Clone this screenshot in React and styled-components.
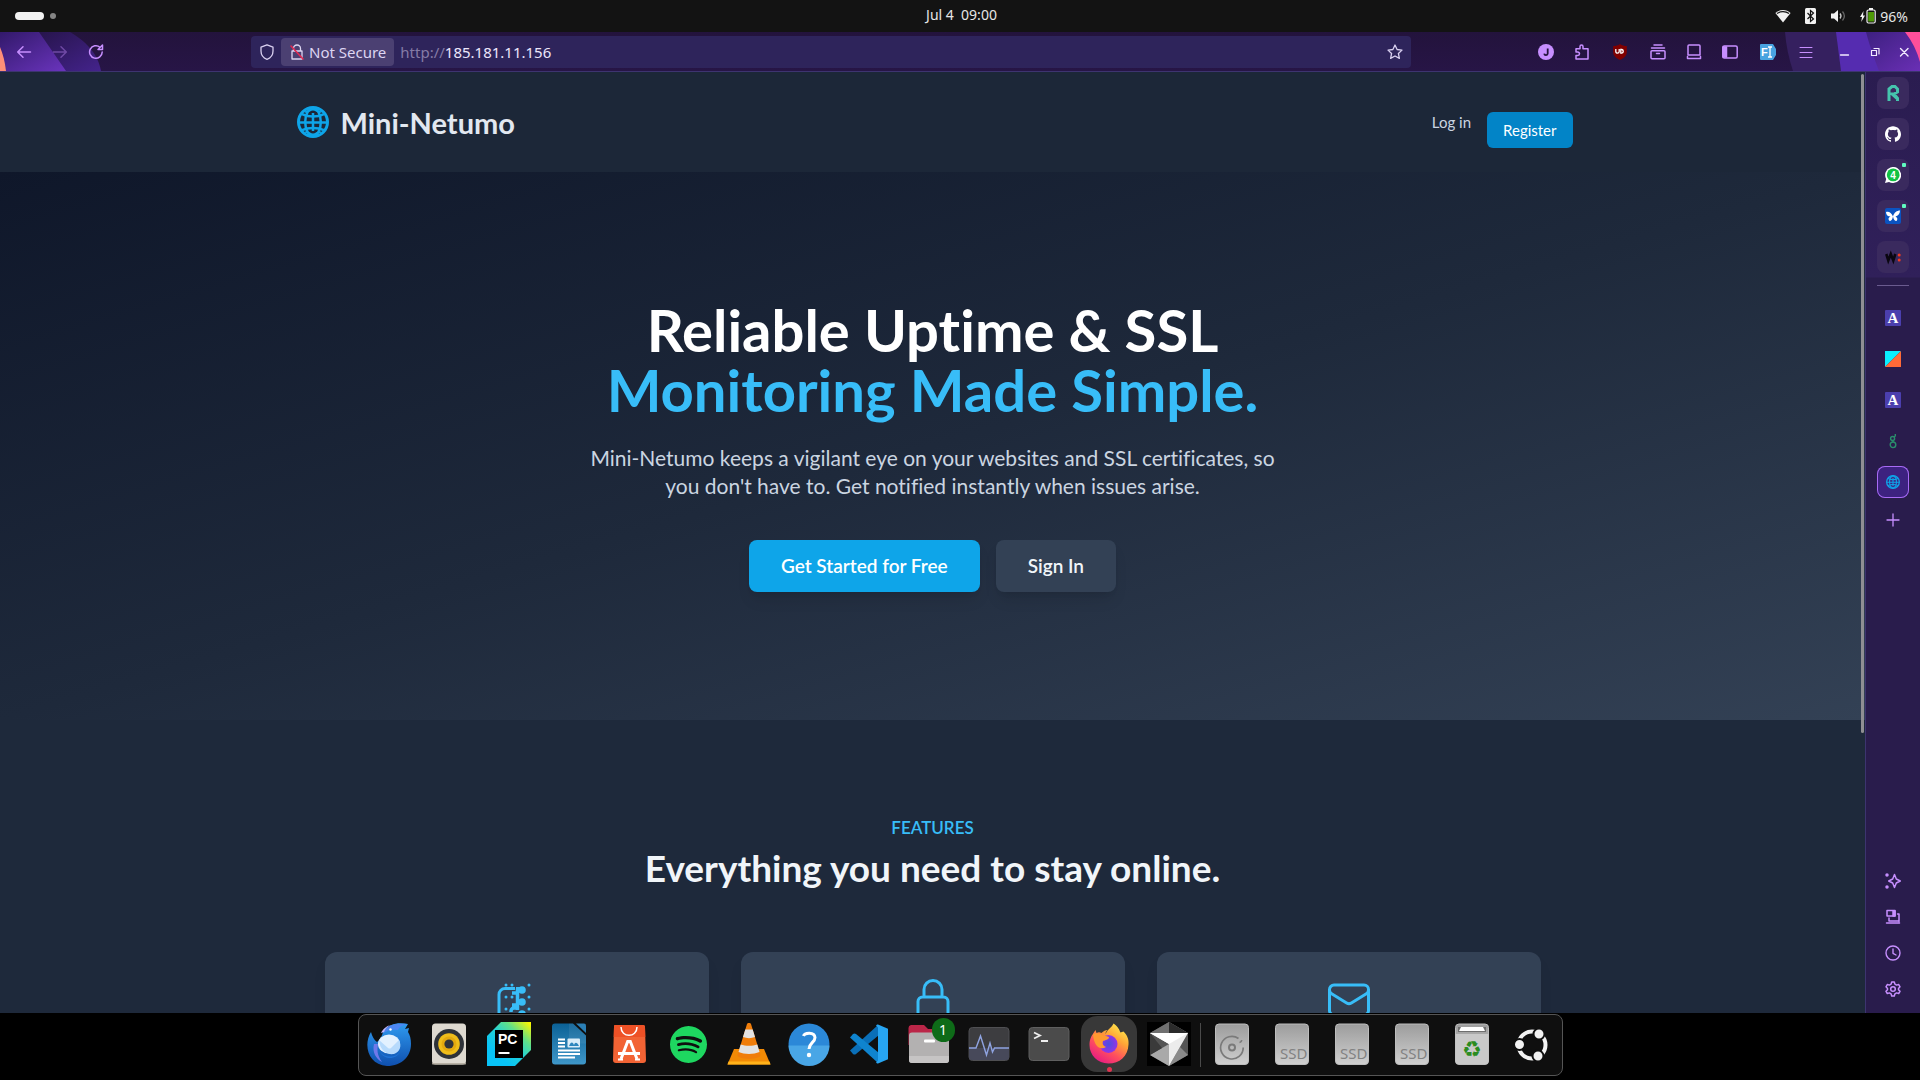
import React from 'react';
import styled, { createGlobalStyle } from 'styled-components';
import { SiSpotify, SiGithub } from 'react-icons/si';

const GlobalStyle = createGlobalStyle`
  *, *::before, *::after { box-sizing: border-box; }
  body { margin: 0; background: #000; overflow: hidden; }
  button, input { font: inherit; color: inherit; border: 0; background: none; padding: 0; margin: 0; }
  button { cursor: pointer; }
  a { color: inherit; text-decoration: none; }
  h1, h2, p { margin: 0; }
  svg { display: block; flex: none; }
`;

/* ---------- shell ---------- */
const Desktop = styled.div`
  display: grid;
  grid-template-rows: 32px minmax(0, 1fr) 67px;
  height: 100vh;
  background: #000;
  font-family: 'Noto Sans', sans-serif;
  font-size: 14px;
`;
const TopBar = styled.header`
  display: grid;
  grid-template-columns: 1fr auto 1fr;
  align-items: center;
  padding: 0 12px 0 15px;
  background: #131313;
  color: #e6e6e6;
`;
const Workspaces = styled.button`
  display: flex;
  align-items: center;
  gap: 6px;
  justify-self: start;
`;
const WorkspacePill = styled.span`
  width: ${(p) => (p.$active ? 29 : 6)}px;
  height: ${(p) => (p.$active ? 8 : 6)}px;
  border-radius: 4px;
  background: ${(p) => (p.$active ? '#f2f2f2' : '#858585')};
`;
const Clock = styled.time`
  white-space: pre;
  line-height: 30px;
  align-self: start;
`;
const SystemTray = styled.div`
  display: flex;
  align-items: center;
  justify-self: end;
  gap: 14px;
`;
const Battery = styled.span`
  display: flex;
  align-items: center;
  gap: 4px;
`;

/* ---------- browser chrome ---------- */
const Browser = styled.div`
  display: flex;
  flex-direction: column;
  min-height: 0;
`;
const Toolbar = styled.div`
  position: relative;
  display: flex;
  align-items: center;
  height: 40px;
  flex: none;
  background: linear-gradient(#23133c, #271546);
  border-bottom: 1px solid #3d3470;
  color: #c78fff;
`;
const ThemeArt = styled.svg`
  position: absolute;
  top: 0;
  ${(p) => (p.$side === 'left' ? 'left: 0;' : 'right: 0;')}
`;
const NavButtons = styled.nav`
  position: relative;
  display: flex;
  width: 251px;
  padding-left: 6px;
`;
const IconButton = styled.button`
  display: grid;
  place-items: center;
  width: ${(p) => p.$w || 36}px;
  height: 32px;
  flex: none;
  opacity: ${(p) => (p.$dim ? 0.4 : 1)};
  color: ${(p) => p.$color || 'inherit'};
`;
const UrlBar = styled.form`
  display: flex;
  align-items: center;
  flex: 1;
  height: 32px;
  padding: 0 0 0 2px;
  border-radius: 4px;
  background: #2e245b;
  color: #d9d0f0;
  font-size: 15px;
`;
const SecurityChip = styled.button`
  display: flex;
  align-items: center;
  gap: 4px;
  height: 28px;
  padding: 0 8px;
  border-radius: 4px;
  background: #4b4072;
  color: #ddd5f2;
  line-height: 26px;
  white-space: nowrap;
`;
const UrlScheme = styled.label`
  padding-left: 6px;
  color: #857ba6;
`;
const UrlInput = styled.input`
  flex: 1;
  min-width: 0;
  color: #ece6fb;
  outline: none;
`;
const Extensions = styled.div`
  position: relative;
  display: flex;
  flex: none;
  padding-left: 117px;
`;
const BrowserBody = styled.div`
  display: flex;
  flex: 1;
  min-height: 0;
`;

/* ---------- side panel ---------- */
const SidePanel = styled.aside`
  display: flex;
  flex-direction: column;
  align-items: center;
  width: 55px;
  flex: none;
  padding: 5px 0 6px;
  border-left: 1px solid #3d3470;
  background: linear-gradient(#2a1c50 0, #30205a 205px, #291c4c 206px);
  color: #c78fff;
`;
const TabStack = styled.div`
  display: flex;
  flex-direction: column;
  gap: 9px;
`;
const TabTile = styled.button`
  position: relative;
  display: grid;
  place-items: center;
  width: 32px;
  height: 32px;
  border-radius: 8px;
  background: ${(p) => (p.$active ? '#3d2280' : p.$pinned ? '#3a2a5e' : 'transparent')};
  box-shadow: ${(p) => (p.$active ? 'inset 0 0 0 1px #a86bf5' : 'none')};
`;
const UnreadDot = styled.span`
  position: absolute;
  top: 4px;
  right: 3px;
  width: 4px;
  height: 4px;
  border-radius: 1px;
  background: #5ffbc0;
`;
const PanelDivider = styled.hr`
  width: 32px;
  height: 1px;
  margin: 12px 0 16px;
  border: 0;
  background: #6a5b8f;
`;
const NewTab = styled.div`
  padding-top: 4px;
`;
const ToolStack = styled.div`
  display: flex;
  flex-direction: column;
  margin-top: auto;
`;
const ToolButton = styled.button`
  display: grid;
  place-items: center;
  width: 32px;
  height: 36px;
`;

/* ---------- web page ---------- */
const PageArea = styled.div`
  display: flex;
  flex: 1;
  min-width: 0;
  position: relative;
  overflow: hidden;
  background: #1e293b;
`;
const Page = styled.div`
  flex: 1;
  min-width: 0;
  font-family: Lato, sans-serif;
  font-variant-ligatures: none;
`;
const ScrollThumb = styled.span`
  position: absolute;
  top: 2px;
  right: 1px;
  width: 3px;
  height: 70%;
  border-radius: 2px;
  background: #8f8f93;
`;
const SiteHeader = styled.header`
  background: #1c2738;
`;
const HeaderInner = styled.div`
  display: flex;
  align-items: center;
  justify-content: space-between;
  max-width: 1280px;
  height: 100px;
  margin: 0 auto;
  padding-left: 4px;
`;
const Brand = styled.a`
  display: flex;
  align-items: center;
  gap: 12px;
  color: #e2e8f0;
  font-size: 29px;
  font-weight: 700;
`;
const AuthLinks = styled.nav`
  display: flex;
  align-items: center;
  gap: 16px;
  font-size: 15px;
  line-height: 20px;
`;
const LoginLink = styled.a`
  color: #cbd5e1;
`;
const RegisterLink = styled.a`
  margin-top: 16px;
  padding: 8px 16px;
  border-radius: 6px;
  background: #0284c7;
  color: #fff;
`;
const Hero = styled.section`
  display: flex;
  flex-direction: column;
  align-items: center;
  padding: 128px 24px;
  background: linear-gradient(to bottom right, #0f172a, #1e293b, #334155);
  text-align: center;
`;
const HeroTitle = styled.h1`
  font-size: 58px;
  line-height: 60px;
  font-weight: 700;
`;
const TitleLine = styled.span`
  display: block;
  color: ${(p) => (p.$accent ? '#38bdf8' : '#fff')};
`;
const HeroText = styled.p`
  max-width: 700px;
  margin-top: 24px;
  color: #cbd5e1;
  font-size: 21px;
  line-height: 28px;
`;
const Actions = styled.div`
  display: flex;
  gap: 16px;
  margin-top: 40px;
`;
const ActionLink = styled.a`
  padding: 12px 32px;
  border-radius: 8px;
  background: ${(p) => (p.$primary ? '#0ea5e9' : '#334155')};
  box-shadow: 0 10px 15px -3px rgba(0, 0, 0, 0.1), 0 4px 6px -4px rgba(0, 0, 0, 0.1);
  color: ${(p) => (p.$primary ? '#fff' : '#f1f5f9')};
  font-size: 19px;
  line-height: 28px;
  font-weight: 600;
`;
const Features = styled.section`
  padding: 96px 24px;
  text-align: center;
`;
const Eyebrow = styled.p`
  color: #38bdf8;
  font-size: 17px;
  line-height: 24px;
  font-weight: 600;
`;
const SectionTitle = styled.h2`
  margin-top: 8px;
  color: #f1f5f9;
  font-size: 37px;
  line-height: 40px;
  font-weight: 700;
`;
const CardGrid = styled.div`
  display: grid;
  grid-template-columns: repeat(3, 1fr);
  gap: 32px;
  max-width: 1216px;
  margin: 64px auto 0;
`;
const Card = styled.article`
  display: flex;
  justify-content: center;
  min-height: 220px;
  padding: 24px;
  border-radius: 12px;
  background: #334155;
  box-shadow: 0 10px 15px -3px rgba(0, 0, 0, 0.1);
  color: #38bdf8;
`;

/* ---------- dock ---------- */
const DockArea = styled.footer`
  display: flex;
  justify-content: center;
  align-items: flex-start;
  padding-top: 1px;
`;
const Dock = styled.nav`
  display: flex;
  height: 62px;
  border: 1px solid #555;
  border-radius: 8px;
  background: #0f0f0f;
`;
const DockItem = styled.button`
  position: relative;
  display: grid;
  place-items: center;
  width: 60px;
  height: 60px;
  padding-bottom: 2px;
`;
const ActiveTile = styled.span`
  display: grid;
  place-items: center;
  width: 56px;
  height: 56px;
  border-radius: 16px;
  background: #383838;
`;
const RunningDot = styled.span`
  position: absolute;
  bottom: 3px;
  left: 28px;
  width: 5px;
  height: 5px;
  border-radius: 50%;
  background: #e0334f;
`;
const DockBadge = styled.span`
  position: absolute;
  top: 3px;
  right: 4px;
  width: 23px;
  height: 24px;
  border-radius: 12px;
  background: #0e6b18;
  color: #fff;
  font-size: 14px;
  line-height: 24px;
`;
const DockDivider = styled.span`
  width: 1px;
  height: 44px;
  margin: 8px 1px;
  background: #4a4a4a;
`;

/* ---------- small icons ---------- */
const Line = ({ size = 16, sw = 1.3, children, box = 16 }) => (
  <svg width={size} height={size} viewBox={`0 0 ${box} ${box}`} fill="none" stroke="currentColor" strokeWidth={sw} strokeLinecap="round" strokeLinejoin="round">
    {children}
  </svg>
);

const GlobeLogo = ({ size }) => (
  <svg width={size} height={size} viewBox="0 0 32 32" fill="none" stroke="#0ea5e9" strokeWidth="2.5">
    <circle cx="16" cy="16" r="14.5" strokeWidth="3" />
    <ellipse cx="16" cy="16" rx="7.8" ry="14" />
    <path d="M16 7v18M2 16.5h28" />
    <path d="M5 8.2c6.500 3.200 15.500 3.200 22 0M5 24.200c6.500-3 15.500-3 22 0" />
    <path d="M8 5.500c2.500 2 4.500-2 8-2s5.500 4 8 2M8 26.500c2.500-2 4.500 2 8 2s5.500-4 8-2" strokeWidth="1.800" />
  </svg>
);

const Wifi = () => (
  <svg width="16" height="16" viewBox="0 0 16 16">
    <path d="M.4 5C4.600 1 11.400 1 15.600 5L8 14.500z" fill="#f2f2f2" />
    <path d="M2 5.600C5.400 3 10.600 3 14 5.600" stroke="#131313" strokeWidth="1.300" fill="none" />
  </svg>
);
const Bluetooth = () => (
  <svg width="11" height="16" viewBox="0 0 11 16">
    <rect width="11" height="16" rx="1.500" fill="#f2f2f2" />
    <path d="M2.500 5l6 6-3 2.500v-11L8.500 5l-6 6" stroke="#131313" strokeWidth="1.200" fill="none" />
  </svg>
);
const Volume = () => (
  <svg width="16" height="16" viewBox="0 0 16 16" fill="none">
    <path d="M1 5.500h3L8 2v12l-4-3.500H1z" fill="#f2f2f2" />
    <path d="M10 5.500c1.200 1.500 1.200 3.500 0 5" stroke="#c8c8c8" strokeWidth="1.300" />
    <path d="M12.500 3.500c2.300 2.700 2.300 6.300 0 9" stroke="#666" strokeWidth="1.300" />
  </svg>
);
const BatteryIcon = () => (
  <svg width="16" height="16" viewBox="0 0 16 16">
    <path d="M3.500 3L0 9h2l-.8 5L5 7.500H3z" fill="#f2f2f2" />
    <rect x="7" y="2" width="8.200" height="13" rx="1.500" fill="none" stroke="#f2f2f2" strokeWidth="1.200" />
    <rect x="9" y="0" width="4" height="2" fill="#f2f2f2" />
    <rect x="8.200" y="4" width="5.800" height="9.500" fill="#4e9a06" />
  </svg>
);

const LetterA = () => (
  <svg width="16" height="16" viewBox="0 0 16 16">
    <rect width="16" height="16" rx="1" fill="#4b3fae" />
    <text x="8" y="13" textAnchor="middle" fontFamily="Liberation Serif, serif" fontWeight="700" fontSize="15" fill="#fff">A</text>
  </svg>
);

/* ---------- dock icons ---------- */
const Art = ({ children }) => <svg width="44" height="44" viewBox="0 0 44 44" fill="none">{children}</svg>;

const Thunderbird = () => (
  <Art>
    <defs>
      <linearGradient id="tb" x1="0" y1="0" x2="0" y2="1"><stop stopColor="#2f9bf0" /><stop offset="1" stopColor="#0f4fae" /></linearGradient>
    </defs>
    <path d="M4 10C-4 23 1 43 20 44c15 0 24-10 24-22 0-5-1-9-3-12l1-4-4 1 3-5C32 0 22 1 16 10c-1 4-3 8-6 10-3-2-5-6-6-10z" fill="url(#tb)" />
    <path d="M16 11c4-8 11-10 24-9-5 1-8 3-9 6-5-1-10 0-15 3z" fill="#4d86f2" />
    <path d="M14 11l3-1c1-3 4-6 7-7-5 1-8 4-10 8z" fill="#c4b5fd" />
    <path d="M7 22c-2 8 2 15 8 18-5-7-5-12-4-18" fill="#6f79ea" />
    <ellipse cx="22" cy="22" rx="11" ry="9.500" fill="#e3f1ff" />
    <path d="M12 18l9 8c1 .8 2 .8 3 0l8-8c3 6 1 12-5 14-7 1-14-3-15-14z" fill="#b7dafc" />
    <path d="M13 30c5 6 15 6 20 0-3 7-15 9-20 0z" fill="#1f72d6" />
    <circle cx="23.500" cy="7.500" r="1.200" fill="#fff" />
  </Art>
);
const Rhythmbox = () => (
  <Art>
    <rect x="5" y="1.500" width="34" height="41" rx="3.500" fill="#ded9d0" />
    <rect x="5" y="41" width="34" height="1.500" rx=".7" fill="#b6afa3" />
    <circle cx="22" cy="22" r="15" fill="#2e3238" />
    <circle cx="22" cy="22" r="10.800" fill="#efbd1a" />
    <circle cx="22" cy="22" r="7.500" fill="#e3a90f" />
    <circle cx="22" cy="22" r="4.600" fill="#30343a" />
  </Art>
);
const PyCharm = () => (
  <Art>
    <defs>
      <linearGradient id="py" x1=".25" y1=".75" x2=".95" y2="0"><stop stopColor="#08c3f7" /><stop offset=".35" stopColor="#21d0d8" /><stop offset=".65" stopColor="#5fe08a" /><stop offset="1" stopColor="#fcf700" /></linearGradient>
    </defs>
    <path d="M14 0h30v28L28 44H0V14z" fill="url(#py)" />
    <rect x="8" y="8" width="28" height="28" fill="#000" />
    <text x="11" y="22" fontFamily="Liberation Sans, sans-serif" fontWeight="700" fontSize="14" fill="#fff">PC</text>
    <rect x="11.500" y="30" width="11" height="2" fill="#fff" />
  </Art>
);
const Writer = () => (
  <Art>
    <defs><linearGradient id="wr" x1="0" y1="0" x2="0" y2="1"><stop stopColor="#0b6196" /><stop offset="1" stopColor="#3f97c9" /></linearGradient></defs>
    <path d="M8 1.500h18l13 12v26a3 3 0 01-3 3H8a3 3 0 01-3-3v-35a3 3 0 013-3z" fill="url(#wr)" />
    <path d="M29 1.500h8a2 2 0 012 2v7.500z" fill="#2b7fb5" />
    <path d="M22 1.500h4l13 12v8H22z" fill="#fff" opacity=".07" />
    <rect x="20.500" y="16.500" width="12.500" height="9" rx="1" fill="#d9ecf8" />
    <path d="M22 24c2-5 4-4 5-1 1-3 3-3 5 1z" fill="#2e86bd" />
    <path d="M11 17.500h7M11 21h7M11 24.500h7M11 28.500h22M11 32h22M11 35.500h17" stroke="#fff" strokeWidth="1.800" />
  </Art>
);
const AppCenter = () => (
  <Art>
    <path d="M8 3h28a2 2 0 012 2l1 33a3 3 0 01-3 3H9a3 3 0 01-3-3L7 5c0-1 0-2 1-2z" fill="#f26334" />
    <path d="M8 3h28a2 2 0 012 2l.3 10H6.700L7 5c0-1 0-2 1-2z" fill="#ee5126" />
    <path d="M14 5c0 11 16 11 16 0" stroke="#fff" strokeWidth="1.500" />
    <path d="M14 37L20.700 19.500h2.600L30 37M11 31.500h22" stroke="#fff" strokeWidth="3" />
    <path d="M11 37.500h5M28 37.500h5" stroke="#fff" strokeWidth="2" />
  </Art>
);
const Vlc = () => (
  <Art>
    <path d="M7 27h30l6.500 15.500H.5z" fill="#f28a05" />
    <path d="M1.500 39.500h41l1 3H.5z" fill="#ffb21a" />
    <path d="M20 2c0-1.500 4-1.500 4 0l9.500 31c0 5-23 5-23 0z" fill="#f07d0a" />
    <path d="M18.300 7.500h7.400l2.300 7.500c-4 1.500-8 1.500-12 0zM13.700 22.500c5 1.800 11.600 1.800 16.600 0l2.200 7.500c-6 2.500-15 2.500-21 0z" fill="#e2e2e2" />
  </Art>
);
const Help = () => (
  <Art>
    <circle cx="22" cy="22" r="20.500" fill="#2b88d8" />
    <path d="M1.500 23.500h41a20.500 20.500 0 01-41 0z" fill="#49a6e6" />
    <path d="M16.500 14c1-3.500 11-4.500 11.500 1.500 0 5-6 5.500-6 11.500" stroke="#fff" strokeWidth="3" />
    <circle cx="22" cy="33" r="2.200" fill="#fff" />
  </Art>
);
const VsCode = () => (
  <Art>
    <path d="M31 3L3 28.500l3 3.500c1 .8 2 .8 3 0L32 13z" fill="#0a6fb8" />
    <path d="M31 41L3 15.500l3-3.500c1-.8 2-.8 3 0L32 31z" fill="#0f84cf" />
    <path d="M31 2.500l10 4.200v30.600L31 41.500c-1 0-1.500-.5-2-1l2-2V5.500l-2-2c.5-.5 1-1 2-1z" fill="#27a5f2" />
  </Art>
);
const Files = () => (
  <Art>
    <path d="M4 3h13l4 4h19v16H1.500V6A3 3 0 014 3z" fill="#bb2648" />
    <path d="M5 10.500h34a3 3 0 013 3V38a3 3 0 01-3 3H5a3 3 0 01-3-3V13.500a3 3 0 013-3z" fill="#b3b1b1" />
    <path d="M2 34h40v4a3 3 0 01-3 3H5a3 3 0 01-3-3z" fill="#c6c4c4" />
    <rect x="17" y="17.500" width="11" height="3" rx="1" fill="#fff" />
  </Art>
);
const Monitor = () => (
  <Art>
    <rect x="2" y="5.500" width="40" height="33" rx="3.500" fill="#3d3d40" stroke="#4f4f52" />
    <path d="M2 26h40v9a3 3 0 01-3 3H5a3 3 0 01-3-3z" fill="#47495a" />
    <path d="M2 26h7l4.500-12 6 19 3.500-12 2.500 9 2-4H42" stroke="#8fa3e0" strokeWidth="1.400" />
  </Art>
);
const Terminal = () => (
  <Art>
    <rect x="2" y="5.500" width="40" height="33" rx="3.500" fill="#4b4b4b" stroke="#5f5f5f" />
    <path d="M7 10.500l6 3-6 3M14 19h7" stroke="#eee" strokeWidth="1.800" />
  </Art>
);
const Firefox = () => (
  <Art>
    <defs>
      <linearGradient id="ff" x1=".85" y1="0" x2=".2" y2="1"><stop stopColor="#fff44f" /><stop offset=".35" stopColor="#ffa436" /><stop offset=".65" stopColor="#ff4f5e" /><stop offset="1" stopColor="#e31587" /></linearGradient>
      <radialGradient id="ffc"><stop stopColor="#4b4fe0" /><stop offset="1" stopColor="#9333e6" /></radialGradient>
    </defs>
    <path d="M26.500 1.500c5 3 6 7 7 9l3-1c4 4 5.500 8 5 13-.5 12-9 19-20 19S2.500 33 2.500 23c0-6 2-9 4-12l2-3 1 3c2-1 3-1 5 0 2-2 4-3 6-3-2 2-2 3-2 4 3-6 6-6 8-10.500z" fill="url(#ff)" />
    <circle cx="21.500" cy="22" r="9" fill="url(#ffc)" />
    <path d="M6 12c4-2 8 0 10 1l6 2c0 3-4 3-6 4-1 3 0 5 3 6-5 3-12 1-13-13z" fill="#ff9a30" />
  </Art>
);
const Cursor = () => (
  <Art>
    <rect width="44" height="44" fill="#000" />
    <path d="M22 0l19 11v22L22 44 3 33V11z" fill="#555" />
    <path d="M22 0l19 11L22 22 3 11z" fill="#707070" />
    <path d="M22 0l19 11-19 4z" fill="#2b2b2b" />
    <path d="M3 33l19-11v22z" fill="#a9a9a9" />
    <path d="M3 11v22l12-7z" fill="#3a3a3a" />
    <path d="M22 44l19-11-8-8z" fill="#8a8a8a" />
    <path d="M3 11h38L22 44V22z" fill="#ececec" />
    <path d="M3 11h38L22 22z" fill="#fff" />
  </Art>
);
const DriveBody = ({ children, id }) => (
  <Art>
    <defs><linearGradient id={id} x1="0" y1="0" x2="0" y2="1"><stop stopColor="#9c9c9c" /><stop offset="1" stopColor="#cfcfcf" /></linearGradient></defs>
    <rect x="5.500" y="2" width="33" height="40.500" rx="3.500" fill={`url(#${id})`} stroke="#bdbdbd" />
    {children}
  </Art>
);
const Disk = () => (
  <DriveBody id="dk">
    <path d="M28.500 16.500a11.300 11.300 0 104.700 9M29.500 20.500c1.200-.3 2-1.200 2.300-2.400" stroke="#7a7a7a" strokeWidth="1.700" />
    <circle cx="22" cy="25.500" r="3" stroke="#7a7a7a" strokeWidth="2" />
  </DriveBody>
);
const Ssd = ({ id }) => (
  <DriveBody id={id}>
    <text x="10" y="37" fontFamily="Noto Sans, sans-serif" fontSize="15" fill="#828282">SSD</text>
  </DriveBody>
);
const Trash = () => (
  <DriveBody id="tr">
    <path d="M5.500 12h33v27a3 3 0 01-3 3h-27a3 3 0 01-3-3z" fill="#c9c9c9" />
    <path d="M8 5h28v5H8z" fill="#6f6f6f" />
    <path d="M9 9l2-4h22l2 4z" fill="#fff" />
    <text x="22" y="35" textAnchor="middle" fontFamily="DejaVu Sans, sans-serif" fontSize="22" fill="#2a8c1f">♻</text>
  </DriveBody>
);
const Ubuntu = () => (
  <Art>
    <circle cx="22" cy="23" r="13.500" stroke="#f2f2f2" strokeWidth="4" />
    <g stroke="#0f0f0f" strokeWidth="2" fill="#f2f2f2">
      <circle cx="9.500" cy="22.500" r="5.500" />
      <circle cx="29" cy="12" r="5.500" />
      <circle cx="28" cy="34" r="5.500" />
    </g>
  </Art>
);

const dockApps = [
  ['Thunderbird', <Thunderbird />],
  ['Rhythmbox', <Rhythmbox />],
  ['PyCharm', <PyCharm />],
  ['LibreOffice Writer', <Writer />],
  ['App Center', <AppCenter />],
  ['Spotify', <SiSpotify size={37} color="#1ed760" />],
  ['VLC', <Vlc />],
  ['Help', <Help />],
  ['Visual Studio Code', <VsCode />],
  ['Files', <Files />, 'badge'],
  ['System Monitor', <Monitor />],
  ['Terminal', <Terminal />],
  ['Firefox', <Firefox />, 'active'],
  ['Cursor', <Cursor />],
];
const dockPlaces = [
  ['Disk', <Disk />],
  ['SSD volume 1', <Ssd id="s1" />],
  ['SSD volume 2', <Ssd id="s2" />],
  ['SSD volume 3', <Ssd id="s3" />],
  ['Trash', <Trash />],
  ['Show apps', <Ubuntu />],
];

const DockEntry = ({ name, icon, state }) => (
  <DockItem aria-label={name}>
    {state === 'active' ? <ActiveTile>{icon}</ActiveTile> : icon}
    {state === 'active' && <RunningDot />}
    {state === 'badge' && <DockBadge>1</DockBadge>}
  </DockItem>
);

/* ---------- sections ---------- */
const BrowserToolbar = () => (
  <Toolbar>
    <ThemeArt $side="left" width="130" height="39" viewBox="0 0 130 39">
      <defs>
        <linearGradient id="la" x1="0" y1="0" x2="1" y2="1"><stop stopColor="#32196a" /><stop offset="1" stopColor="#6a34bd" /></linearGradient>
        <linearGradient id="lb" x1="0" y1="0" x2="1" y2="1"><stop stopColor="#26144a" /><stop offset="1" stopColor="#44238c" /></linearGradient>
      </defs>
      <path d="M70 0c20 12 28 24 31 39H60L35 0z" fill="url(#lb)" />
      <path d="M0 0h39l27 39H0z" fill="url(#la)" />
      <path d="M0 15c3 7 5 15 6 24H0z" fill="#ff8f78" />
    </ThemeArt>
    <ThemeArt $side="right" width="140" height="39" viewBox="0 0 140 39">
      <defs>
        <linearGradient id="ra" x1="0" y1="0" x2="1" y2="1"><stop stopColor="#3d2080" /><stop offset="1" stopColor="#6a2fb5" /></linearGradient>
      </defs>
      <path d="M5 0h135v39H13C9 27 6 14 5 0z" fill="#35205f" />
      <path d="M56 0h84v39H61z" fill="#552cb0" />
      <path d="M86 0h54v39H99C94 26 89 12 86 0z" fill="url(#ra)" />
      <path d="M125 0h15v30c-3-11-8-21-15-30z" fill="#ff4f9a" />
    </ThemeArt>
    <NavButtons aria-label="Navigation">
      <IconButton aria-label="Back"><Line sw={1.500}><path d="M14.500 8H2M7 2.800L1.700 8 7 13.200" /></Line></IconButton>
      <IconButton aria-label="Forward" $dim><Line sw={1.500}><path d="M1.500 8H14M9 2.800L14.300 8 9 13.200" /></Line></IconButton>
      <IconButton aria-label="Reload"><Line sw={1.500}><path d="M14.200 8A6.300 6.300 0 1112 3.200M14.500 1v4.500H10z" /></Line></IconButton>
    </NavButtons>
    <UrlBar onSubmit={(e) => e.preventDefault()}>
      <IconButton type="button" aria-label="Tracking protection" $w={28}>
        <Line><path d="M8 .8l6 2.400v3.800c0 4-2.500 7-6 8.300C4.500 14 2 11 2 7V3.200z" /></Line>
      </IconButton>
      <SecurityChip type="button">
        <Line><path d="M4.500 7V4.500a3.500 3.500 0 017 0V7M3 7h10v8H3z" /><path d="M2 2l12 13" stroke="#e22850" strokeWidth="1.600" /></Line>
        Not Secure
      </SecurityChip>
      <UrlScheme htmlFor="url">http://</UrlScheme>
      <UrlInput id="url" defaultValue="185.181.11.156" />
      <IconButton type="button" aria-label="Bookmark" $w={32}>
        <Line><path d="M8 1l2.100 4.500 4.900.6-3.600 3.400 1 4.900L8 12l-4.400 2.400 1-4.900L1 6.100l4.900-.6z" /></Line>
      </IconButton>
    </UrlBar>
    <Extensions>
      <IconButton aria-label="Account">
        <svg width="16" height="16" viewBox="0 0 16 16"><circle cx="8" cy="8" r="8" fill="#c78fff" /><path d="M9.700 4.500v5c0 2-3.200 2.200-3.500.2" fill="none" stroke="#23133c" strokeWidth="1.800" /></svg>
      </IconButton>
      <IconButton aria-label="Extensions">
        <Line sw={1.500}><path d="M2 7V4.800h4V2.500a1.500 1.500 0 013 0v2.300h5V15H2v-3.500h1.800a1.700 1.700 0 000-3.400H2z" /></Line>
      </IconButton>
      <IconButton aria-label="uBlock" $w={40}>
        <svg width="16" height="16" viewBox="0 0 16 16"><path d="M8 0c2 1.500 4 2 6.800 2v6c0 4-3 6-6.800 8-3.800-2-6.800-4-6.800-8V2C4 2 6 1.500 8 0z" fill="#800000" /><path d="M3.800 5v2.500a1.700 1.700 0 003.400 0V5M8.800 5.500v3.700h1a1.900 1.900 0 000-3.700z" fill="none" stroke="#fff" strokeWidth="1.300" /></svg>
      </IconButton>
      <IconButton aria-label="Collections">
        <Line sw={1.500}><path d="M4 1h8M1.500 4h13M2 6.800h12a1 1 0 011 1v6a1 1 0 01-1 1H2a1 1 0 01-1-1v-6a1 1 0 011-1zM6.500 9.500h3" /></Line>
      </IconButton>
      <IconButton aria-label="Split view">
        <Line sw={1.500}><path d="M3 1h10a1 1 0 011 1v9H2V2a1 1 0 011-1zM1.500 12.500v2h13v-2" /></Line>
      </IconButton>
      <IconButton aria-label="Sidebar">
        <Line sw={1.500}><rect x=".8" y="2" width="14.400" height="12" rx="1.500" /><path d="M1 3h3.500v10H1z" fill="currentColor" /></Line>
      </IconButton>
      <IconButton aria-label="Font finder" $w={40}>
        <svg width="16" height="16" viewBox="0 0 16 16"><path d="M1 0h12l3 5v6l-3 5H1a1 1 0 01-1-1V1a1 1 0 011-1z" fill="#48a3e0" /><text x="1" y="12" fontFamily="Liberation Sans, sans-serif" fontWeight="700" fontSize="11" fill="#fff">F</text><path d="M8 3h4M10 3v10M8 13h4" stroke="#fff" strokeWidth="1.300" /></svg>
      </IconButton>
      <IconButton aria-label="Menu">
        <Line sw={1}><path d="M2 3.500h12M2 8.500h12M2 13.500h12" /></Line>
      </IconButton>
      <IconButton aria-label="Minimize" $w={40} $color="#f3ecff"><Line sw={1.300}><path d="M4.500 11h8" /></Line></IconButton>
      <IconButton aria-label="Restore" $w={24} $color="#f3ecff"><Line sw={1.200}><path d="M3.500 6.500h5v5h-5zM6 4.500h5V10" /></Line></IconButton>
      <IconButton aria-label="Close" $w={32} $color="#f3ecff"><Line sw={1.400}><path d="M4.500 4.500l7.500 7.500M12 4.500L4.500 12" /></Line></IconButton>
    </Extensions>
  </Toolbar>
);

const BrowserPanel = () => (
  <SidePanel>
    <TabStack>
      <TabTile $pinned aria-label="Pinned tab R">
        <svg width="16" height="16" viewBox="0 0 16 16" fill="none" stroke="#45c4ad" strokeWidth="3"><path d="M4 16V4l3-2.500h3L12.500 4v3L9 9H7l5.500 5v2M9 9l4 5" /></svg>
      </TabTile>
      <TabTile $pinned aria-label="GitHub"><SiGithub size={16} color="#fff" /></TabTile>
      <TabTile $pinned aria-label="WhatsApp">
        <svg width="16" height="16" viewBox="0 0 16 16"><path d="M0 16l1.200-4A8 8 0 118 16a8 8 0 01-4-1z" fill="#fff" /><circle cx="8.200" cy="7.900" r="6.400" fill="#12c244" /><text x="8" y="11.500" textAnchor="middle" fontFamily="Liberation Sans, sans-serif" fontWeight="700" fontSize="10" fill="#fff">4</text></svg>
        <UnreadDot />
      </TabTile>
      <TabTile $pinned aria-label="Butterfly tab">
        <svg width="16" height="16" viewBox="0 0 16 16"><rect width="16" height="16" rx="2" fill="#0b53c0" /><path d="M8 8.500C6.500 4.500 3.500 3 1 4c0 3 2 4.500 4.500 4.500C3 9.500 3 11.500 4.500 13c2 0 3-2 3.500-4.500.5 2.500 1.500 4.500 3.500 4.500 1.500-1.500 1-3.500-1-4.500C13 8 15 5.500 15 2.500c-3 0-6 2-7 6z" fill="#fff" /></svg>
        <UnreadDot />
      </TabTile>
      <TabTile $pinned aria-label="W tab">
        <svg width="16" height="16" viewBox="0 0 16 16"><path d="M1.300 5l2 6.500L5.800 5l2.500 6.500 2-6.500" stroke="#0a0610" strokeWidth="2.600" fill="none" /><circle cx="14.200" cy="6" r="1.500" fill="#f03a20" /><circle cx="14.200" cy="11" r="1.500" fill="#f03a20" /></svg>
      </TabTile>
    </TabStack>
    <PanelDivider />
    <TabStack>
      <TabTile aria-label="Tab A"><LetterA /></TabTile>
      <TabTile aria-label="Colour tab">
        <svg width="16" height="16" viewBox="0 0 16 16"><path d="M0 0h16L0 16z" fill="#0aefff" /><path d="M16 0v16H0z" fill="#ff6a38" /></svg>
      </TabTile>
      <TabTile aria-label="Second tab A"><LetterA /></TabTile>
      <TabTile aria-label="Tab g">
        <svg width="16" height="16" viewBox="0 0 16 16" fill="none" stroke="#2a8d6c" strokeWidth="1.400"><circle cx="7.600" cy="5.500" r="2" /><circle cx="8" cy="11.800" r="2.800" /><path d="M8 9V7.500M9 4L10.300 3V1" /></svg>
      </TabTile>
      <TabTile $active aria-label="Current tab"><GlobeLogo size={14} /></TabTile>
    </TabStack>
    <NewTab>
      <ToolButton aria-label="New tab"><Line sw={1.300}><path d="M8 2v12M2 8h12" /></Line></ToolButton>
    </NewTab>
    <ToolStack>
      <ToolButton aria-label="AI assistant"><Line sw={1.500}><path d="M9.500 1.500L11.300 6l4 2-4 2-1.800 4.500L7.700 10l-4-2 4-2z" /><circle cx="2" cy="2" r="1" fill="currentColor" /><circle cx="2" cy="14" r="1" fill="currentColor" /></Line></ToolButton>
      <ToolButton aria-label="Synced tabs"><Line sw={1.500}><path d="M2 1.500h8v5.500H2zM4 9v3M12.500 5H14v7.500M1.500 14h13M4 12h9" /><path d="M8 2h2v5H8z" fill="currentColor" /></Line></ToolButton>
      <ToolButton aria-label="History"><Line sw={1.400}><circle cx="8" cy="8" r="7" /><path d="M8 4v4.300l3 1.700" /></Line></ToolButton>
      <ToolButton aria-label="Settings"><Line sw={1.500}><circle cx="8" cy="8" r="2.300" /><path d="M6.700 1h2.600l.6 2.100 1.700 1 2.100-.6 1.300 2.300L13.500 7.400v1.400l1.500 1.500-1.300 2.200-2.100-.6-1.700 1-.6 2.100H6.700l-.6-2.100-1.700-1-2.100.6L1 10.300l1.500-1.500V7.400L1 5.800l1.300-2.300 2.100.6 1.700-1z" /></Line></ToolButton>
    </ToolStack>
  </SidePanel>
);

const UptimeIcon = () => (
  <svg width="48" height="48" viewBox="0 0 48 48" fill="none" stroke="currentColor" strokeWidth="3">
    <path d="M6 40V18.500a6 6 0 016-6h10" />
    <path d="M24.500 12.500V34M19 17h5M19 29h5M18 36v-1a3 3 0 013-3h4" strokeWidth="3.500" />
    <g fill="currentColor" stroke="none">
      <circle cx="29" cy="14" r="3.800" /><circle cx="29" cy="26" r="3.800" /><circle cx="29" cy="38" r="3.800" />
      <path d="M23 11h6v4h-6z" />
      {[9, 21, 33].map((y) => [13, 19, 36].map((x) => <circle key={`${x}-${y}`} cx={x} cy={y} r="1.500" />))}
    </g>
  </svg>
);
const LockIcon = () => (
  <Line size={48} box={24} sw={1.500}><path d="M16.500 10.500V6.750a4.500 4.500 0 10-9 0v3.750m-.75 11.250h10.500a2.250 2.250 0 002.250-2.250v-6.750a2.250 2.250 0 00-2.250-2.250H6.750a2.250 2.250 0 00-2.250 2.250v6.750a2.250 2.250 0 002.250 2.250z" /></Line>
);
const MailIcon = () => (
  <Line size={48} box={24} sw={1.500}><path d="M21.750 6.750v10.500a2.250 2.250 0 01-2.250 2.250h-15a2.250 2.250 0 01-2.250-2.250V6.750m19.500 0A2.250 2.250 0 0019.500 4.500h-15a2.250 2.250 0 00-2.250 2.250m19.500 0v.243a2.250 2.250 0 01-1.070 1.916l-7.500 4.615a2.250 2.250 0 01-2.360 0L3.320 8.910a2.250 2.250 0 01-1.070-1.916V6.750" /></Line>
);

const LandingPage = () => (
  <Page>
    <SiteHeader>
      <HeaderInner>
        <Brand href="#"><GlobeLogo size={32} />Mini-Netumo</Brand>
        <AuthLinks aria-label="Account">
          <LoginLink href="#login">Log in</LoginLink>
          <RegisterLink href="#register">Register</RegisterLink>
        </AuthLinks>
      </HeaderInner>
    </SiteHeader>
    <Hero>
      <HeroTitle>
        <TitleLine>Reliable Uptime &amp; SSL</TitleLine>
        <TitleLine $accent>Monitoring Made Simple.</TitleLine>
      </HeroTitle>
      <HeroText>Mini-Netumo keeps a vigilant eye on your websites and SSL certificates, so you don't have to. Get notified instantly when issues arise.</HeroText>
      <Actions>
        <ActionLink $primary href="#register">Get Started for Free</ActionLink>
        <ActionLink href="#login">Sign In</ActionLink>
      </Actions>
    </Hero>
    <Features>
      <Eyebrow>FEATURES</Eyebrow>
      <SectionTitle>Everything you need to stay online.</SectionTitle>
      <CardGrid>
        <Card><UptimeIcon /></Card>
        <Card><LockIcon /></Card>
        <Card><MailIcon /></Card>
      </CardGrid>
    </Features>
  </Page>
);

export default function App() {
  return (
    <Desktop>
      <GlobalStyle />
      <TopBar>
        <Workspaces aria-label="Workspaces"><WorkspacePill $active /><WorkspacePill /></Workspaces>
        <Clock>{'Jul 4  09:00'}</Clock>
        <SystemTray>
          <Wifi />
          <Bluetooth />
          <Volume />
          <Battery><BatteryIcon />96%</Battery>
        </SystemTray>
      </TopBar>
      <Browser>
        <BrowserToolbar />
        <BrowserBody>
          <PageArea><LandingPage /><ScrollThumb /></PageArea>
          <BrowserPanel />
        </BrowserBody>
      </Browser>
      <DockArea>
        <Dock aria-label="Dock">
          {dockApps.map(([name, icon, state]) => <DockEntry key={name} name={name} icon={icon} state={state} />)}
          <DockDivider />
          {dockPlaces.map(([name, icon]) => <DockEntry key={name} name={name} icon={icon} />)}
        </Dock>
      </DockArea>
    </Desktop>
  );
}
